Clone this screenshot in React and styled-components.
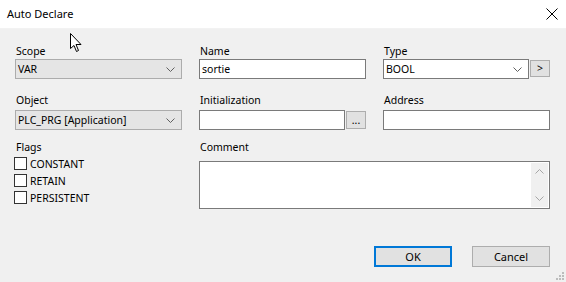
import React from 'react';
import styled, { createGlobalStyle } from 'styled-components';

const GlobalStyle = createGlobalStyle`
  body {
    margin: 0;
    background: #f0f0f0;
    font-family: "Noto Sans", "Liberation Sans", sans-serif;
    font-size: 10.5px;
    color: #000;
  }
`;

const Window = styled.div`
  width: 566px;
  height: 282px;
  display: flex;
  flex-direction: column;
  background: #f0f0f0;
  position: relative;
  overflow: hidden;
`;

const TitleBar = styled.div`
  height: 29px;
  box-sizing: border-box;
  background: #fff;
  display: flex;
  align-items: center;
  justify-content: space-between;
  padding: 0 8px 0 7px;
  border-bottom: 1px solid #f2f2f2;
`;

const Title = styled.span`
  font-size: 11px;
  line-height: 14px;
`;

const Body = styled.div`
  flex: 1;
  display: flex;
  flex-direction: column;
  padding: 15px 16px 15px 15px;
`;

const Row = styled.div`
  display: grid;
  grid-template-columns: 167px 167px 167px;
  column-gap: 17px;
  margin-top: ${p => p.$top || 0}px;
`;

const Field = styled.div`
  display: flex;
  flex-direction: column;
  grid-column: ${p => p.$span || 'auto'};
`;

const Label = styled.label`
  height: 15px;
  line-height: 15px;
  padding-left: 1px;
  margin-bottom: ${p => p.$gap || 0}px;
`;

const Combo = styled.div`
  height: 20px;
  box-sizing: border-box;
  border: 1px solid #acacac;
  background: #e5e5e5;
  display: flex;
  align-items: center;
  justify-content: space-between;
  padding: 0 6px 0 2px;
`;

const Input = styled.div`
  flex: 1;
  height: 20px;
  box-sizing: border-box;
  border: 1px solid #7a7a7a;
  background: #fff;
  display: flex;
  align-items: center;
  justify-content: space-between;
  padding: 0 6px 0 2px;
`;

const InputGroup = styled.div`
  display: flex;
  align-items: flex-start;
  gap: 1px;
`;

const SmallButton = styled.div`
  width: 20px;
  height: ${p => p.$h || 18}px;
  margin-top: 1px;
  box-sizing: border-box;
  border: 1px solid #adadad;
  background: #e1e1e1;
  display: flex;
  align-items: center;
  justify-content: center;
  line-height: 1;
`;

const CheckList = styled.div`
  display: flex;
  flex-direction: column;
  margin-left: -1px;
`;

const CheckRow = styled.div`
  height: 17px;
  display: flex;
  align-items: flex-start;
  gap: 3px;
  line-height: 13px;
`;

const CheckText = styled.span`
  padding-top: 1px;
`;

const Box = styled.span`
  width: 13px;
  height: 13px;
  box-sizing: border-box;
  border: 1px solid #333;
  background: #fff;
`;

const TextArea = styled.div`
  height: 48px;
  box-sizing: border-box;
  border: 1px solid #7a7a7a;
  background: #fff;
  display: flex;
  justify-content: flex-end;
  padding: 1px;
`;

const Scroll = styled.div`
  width: 17px;
  background: #f0f0f0;
  display: flex;
  flex-direction: column;
  justify-content: space-between;
  align-items: center;
  padding: 6px 0;
`;

const Footer = styled.div`
  margin-top: auto;
  display: flex;
  justify-content: flex-end;
  gap: 20px;
`;

const Button = styled.div`
  width: 78px;
  height: 21px;
  box-sizing: border-box;
  border: ${p => (p.$primary ? '2px solid #0078d7' : '1px solid #adadad')};
  background: #e1e1e1;
  display: flex;
  align-items: center;
  justify-content: center;
  font-size: 11px;
`;

const Cursor = styled.svg`
  position: absolute;
  left: 70px;
  top: 33px;
`;

const Grip = styled.svg`
  position: absolute;
  right: 1px;
  bottom: 1px;
`;

const Chevron = ({ up }) => (
  <svg width="9" height="5" viewBox="0 0 9 5">
    <path d={up ? 'M0.5 4.5 L4.5 0.5 L8.5 4.5' : 'M0.5 0.5 L4.5 4.5 L8.5 0.5'} fill="none" stroke={up ? '#a6a6a6' : '#606060'} strokeWidth="1" />
  </svg>
);

function Check({ children }) {
  return (
    <CheckRow>
      <Box />
      <CheckText>{children}</CheckText>
    </CheckRow>
  );
}

export default function App() {
  return (
    <Window>
      <GlobalStyle />
      <TitleBar>
        <Title>Auto Declare</Title>
        <svg width="12" height="12" viewBox="0 0 12 12">
          <path d="M0.5 0.5 L11.5 11.5 M11.5 0.5 L0.5 11.5" stroke="#000" strokeWidth="1" />
        </svg>
      </TitleBar>
      <Body>
        <Row>
          <Field>
            <Label>Scope</Label>
            <Combo>VAR<Chevron /></Combo>
          </Field>
          <Field>
            <Label>Name</Label>
            <Input>sortie</Input>
          </Field>
          <Field>
            <Label>Type</Label>
            <InputGroup>
              <Input>BOOL<Chevron /></Input>
              <SmallButton $h={17}>&gt;</SmallButton>
            </InputGroup>
          </Field>
        </Row>
        <Row $top={14}>
          <Field>
            <Label $gap={2}>Object</Label>
            <Combo>PLC_PRG [Application]<Chevron /></Combo>
          </Field>
          <Field>
            <Label $gap={2}>Initialization</Label>
            <InputGroup>
              <Input />
              <SmallButton>...</SmallButton>
            </InputGroup>
          </Field>
          <Field>
            <Label $gap={2}>Address</Label>
            <Input />
          </Field>
        </Row>
        <Row $top={10}>
          <Field>
            <Label $gap={2}>Flags</Label>
            <CheckList>
              <Check>CONSTANT</Check>
              <Check>RETAIN</Check>
              <Check>PERSISTENT</Check>
            </CheckList>
          </Field>
          <Field $span="2 / 4">
            <Label $gap={6}>Comment</Label>
            <TextArea>
              <Scroll>
                <Chevron up />
                <svg width="9" height="5" viewBox="0 0 9 5">
                  <path d="M0.5 0.5 L4.5 4.5 L8.5 0.5" fill="none" stroke="#a6a6a6" />
                </svg>
              </Scroll>
            </TextArea>
          </Field>
        </Row>
        <Footer>
          <Button $primary>OK</Button>
          <Button>Cancel</Button>
        </Footer>
      </Body>
      <Cursor width="13" height="20" viewBox="0 0 13 20">
        <path d="M0.5 0.5 L0.5 15.5 L4 12.5 L6.5 18.5 L8.5 17.5 L6 11.5 L11 11.5 Z" fill="#fff" stroke="#000" strokeWidth="1" strokeLinejoin="miter" />
      </Cursor>
      <Grip width="9" height="9" viewBox="0 0 9 9">
        <g fill="#bcbcbc">
          <rect x="6" y="0" width="2" height="2" />
          <rect x="3" y="3" width="2" height="2" />
          <rect x="6" y="3" width="2" height="2" />
          <rect x="0" y="6" width="2" height="2" />
          <rect x="3" y="6" width="2" height="2" />
          <rect x="6" y="6" width="2" height="2" />
        </g>
      </Grip>
    </Window>
  );
}
